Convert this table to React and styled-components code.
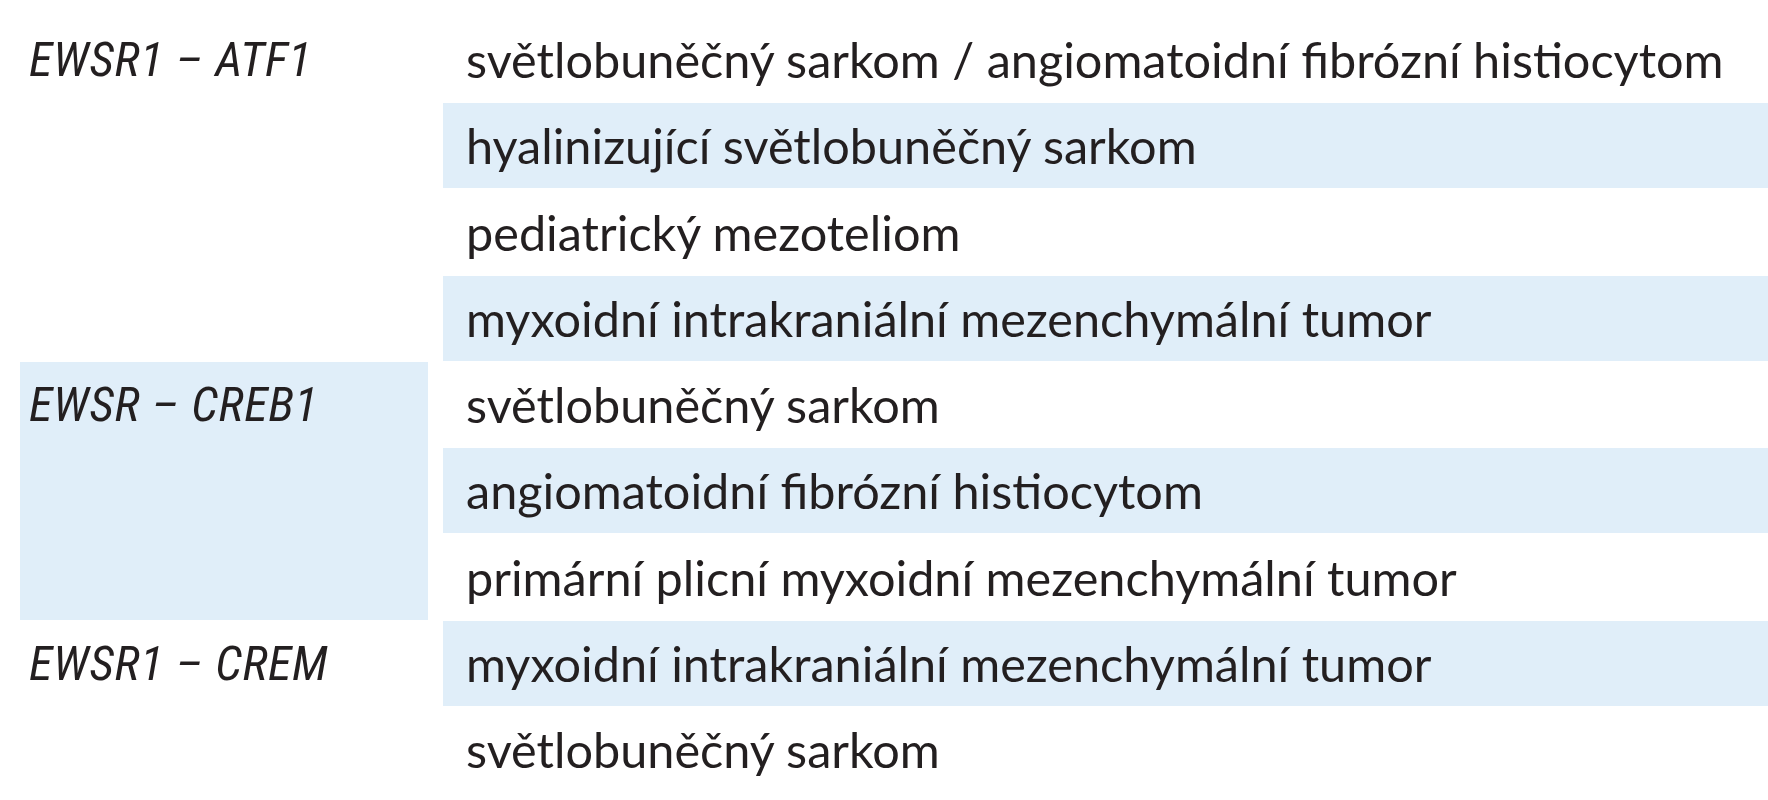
import React from 'react';
import styled, { createGlobalStyle } from 'styled-components';

const GlobalStyle = createGlobalStyle`
  html, body {
    margin: 0;
    background: #ffffff;
  }
  body {
    font-family: Lato, "Noto Sans", sans-serif;
    color: #231f20;
  }
`;

const Table = styled.div`
  display: grid;
  grid-template-columns: 408px 1fr;
  grid-auto-rows: 85px;
  column-gap: 15px;
  row-gap: 1.25px;
  padding: 17px 0 0 20px;
`;

const GeneCell = styled.div`
  grid-column: 1;
  grid-row: ${(p) => p.$start} / span ${(p) => p.$span};
  background: ${(p) => (p.$shaded ? '#e0eef9' : 'transparent')};
  padding-left: 9px;
  font-family: "Roboto Condensed", Lato, sans-serif;
  font-style: italic;
  font-size: 48.6px;
  letter-spacing: 0.6px;
  line-height: 85px;
  white-space: nowrap;
`;

const TumorCell = styled.div`
  grid-column: 2;
  background: ${(p) => (p.$shaded ? '#e0eef9' : 'transparent')};
  padding-left: 23px;
  font-size: 48.6px;
  line-height: 85px;
  white-space: nowrap;
`;

const genes = [
  { name: 'EWSR1 – ATF1', start: 1, span: 4, shaded: false },
  { name: 'EWSR – CREB1', start: 5, span: 3, shaded: true },
  { name: 'EWSR1 – CREM', start: 8, span: 2, shaded: false },
];

const tumors = [
  'světlobuněčný sarkom / angiomatoidní fibrózní histiocytom',
  'hyalinizující světlobuněčný sarkom',
  'pediatrický mezoteliom',
  'myxoidní intrakraniální mezenchymální tumor',
  'světlobuněčný sarkom',
  'angiomatoidní fibrózní histiocytom',
  'primární plicní myxoidní mezenchymální tumor',
  'myxoidní intrakraniální mezenchymální tumor',
  'světlobuněčný sarkom',
];

export default function App() {
  return (
    <>
      <GlobalStyle />
      <Table>
        {genes.map((g) => (
          <GeneCell key={g.name} $start={g.start} $span={g.span} $shaded={g.shaded}>
            {g.name}
          </GeneCell>
        ))}
        {tumors.map((t, i) => (
          <TumorCell key={i} style={{ gridRow: i + 1 }} $shaded={i % 2 === 1}>
            {t}
          </TumorCell>
        ))}
      </Table>
    </>
  );
}
